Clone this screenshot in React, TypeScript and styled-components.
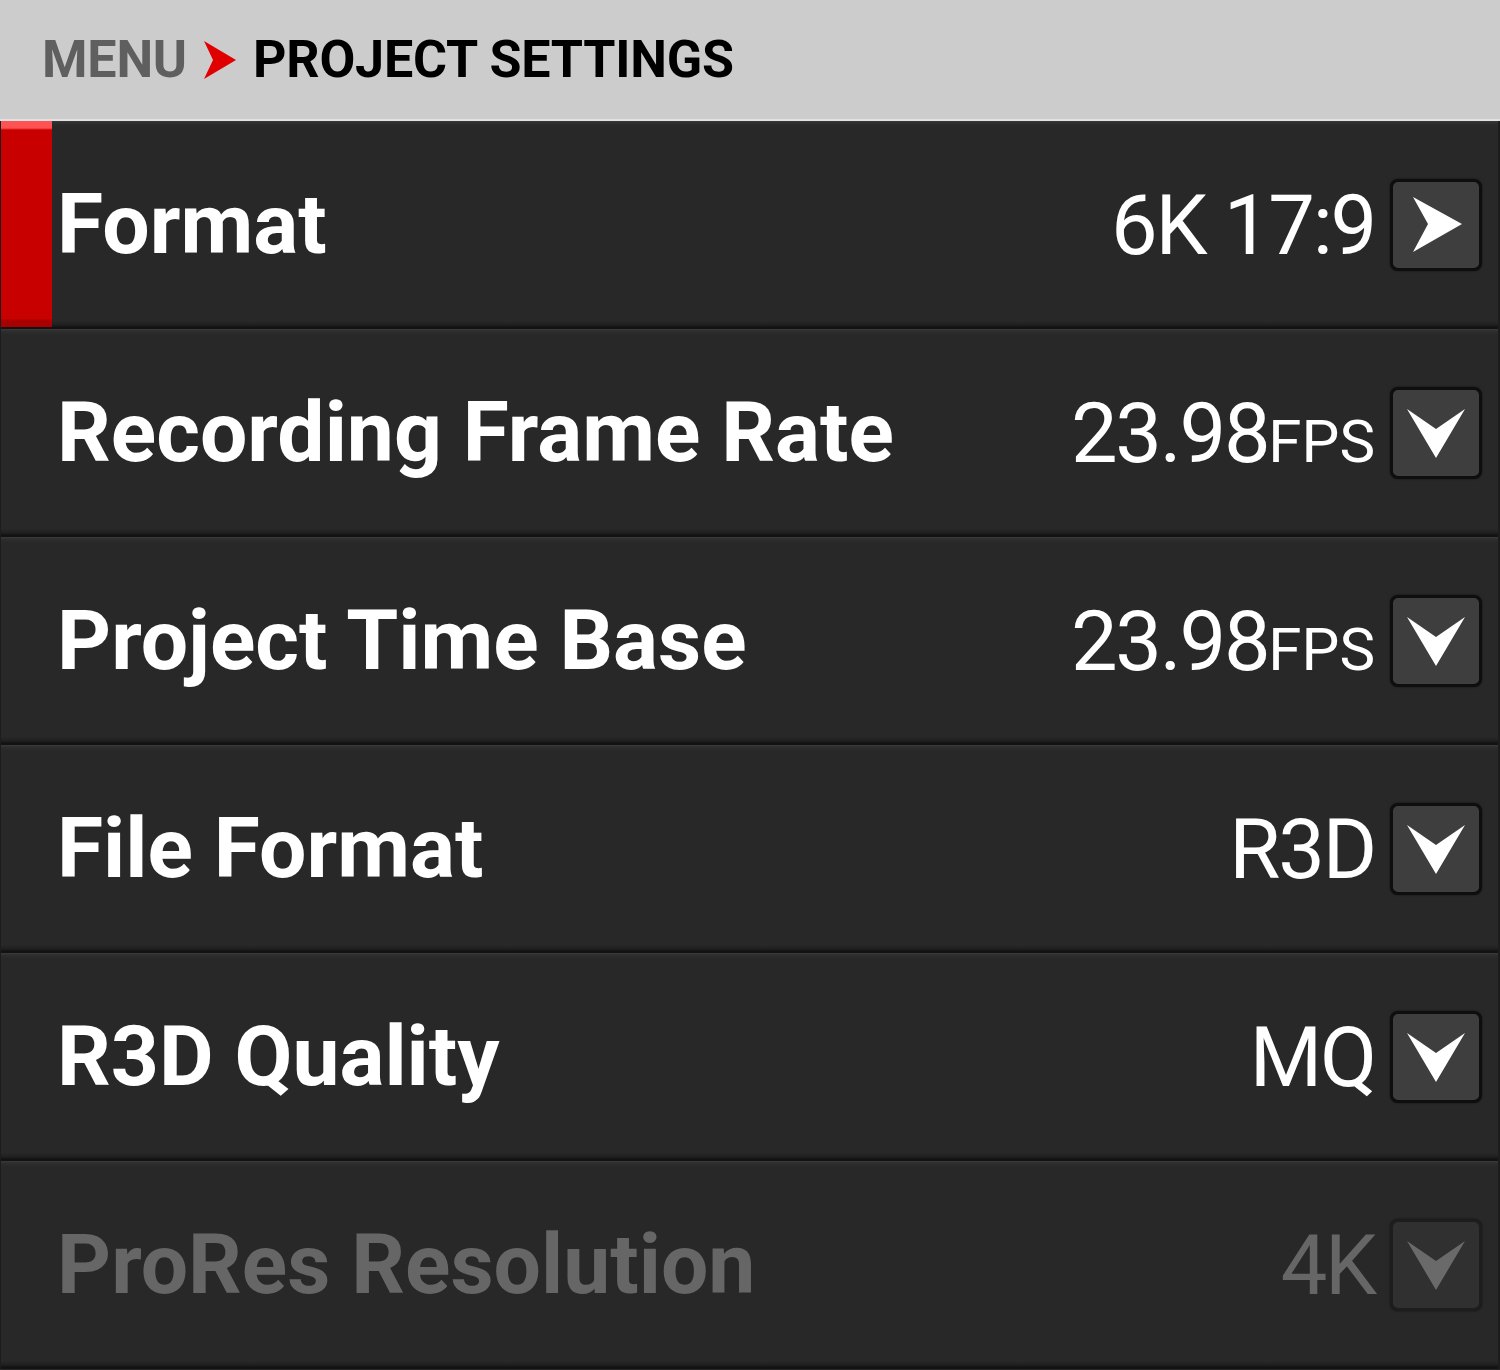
import React from "react";
import styled, { createGlobalStyle } from "styled-components";

const Global = createGlobalStyle`
  html, body { margin: 0; padding: 0; background: #262626; }
  body { font-family: Roboto, "Noto Sans", sans-serif; }
`;

const Screen = styled.div`
  width: 1500px;
  height: 1370px;
  overflow: hidden;
  display: flex;
  flex-direction: column;
  background: #262626;
`;

const Header = styled.div`
  height: 119px;
  flex: 0 0 119px;
  background: #cccccc;
  border-bottom: 2px solid #e2e2e2;
  display: flex;
  align-items: center;
  gap: 16px;
  padding-left: 42px;
  box-sizing: content-box;
  font-family: Roboto, sans-serif;
  font-weight: 700;
  font-size: 52px;
  letter-spacing: -0.2px;
`;

const Crumb = styled.span<{ $active?: boolean }>`
  color: ${(p) => (p.$active ? "#000000" : "#5f5f5f")};
  line-height: 1;
`;

const Row = styled.div`
  position: relative;
  flex: 0 0 208px;
  height: 208px;
  box-sizing: border-box;
  display: flex;
  align-items: center;
  padding: 0 16px 0 56px;
  background: linear-gradient(
    to bottom,
    #3a3a3a 0px,
    #2e2e2e 2px,
    #282828 6px,
    #282828 calc(100% - 8px),
    #1f1f1f calc(100% - 4px),
    #121212 calc(100% - 2px),
    #141414 100%
  );
  border-left: 1px solid #1c1c1c;
  border-right: 2px solid #1c1c1c;
`;

const SelectMark = styled.div`
  position: absolute;
  left: 0;
  top: 0;
  width: 51px;
  bottom: 2px;
  background: linear-gradient(
    to bottom,
    #ff5252 0px,
    #ff5252 7px,
    #c80000 9px,
    #c80000 calc(100% - 8px),
    #a80000 calc(100% - 7px),
    #a80000 100%
  );
`;

const Label = styled.div<{ $disabled?: boolean }>`
  flex: 1;
  font-family: Roboto, sans-serif;
  font-weight: 700;
  font-size: 84px;
  color: ${(p) => (p.$disabled ? "#666666" : "#ffffff")};
  line-height: 1;
  white-space: nowrap;
`;

const Value = styled.div<{ $disabled?: boolean }>`
  font-family: Roboto, sans-serif;
  font-weight: 400;
  font-size: 83px;
  letter-spacing: -2.2px;
  color: ${(p) => (p.$disabled ? "#666666" : "#ffffff")};
  line-height: 1;
  white-space: nowrap;
  margin-right: 15px;
`;

const Unit = styled.span`
  font-size: 60px;
  letter-spacing: 0;
`;

const ArrowButton = styled.div<{ $disabled?: boolean }>`
  width: 92px;
  height: 92px;
  box-sizing: border-box;
  border: 3px solid ${(p) => (p.$disabled ? "#1d1d1d" : "#0e0e0e")};
  border-radius: 8px;
  background: ${(p) => (p.$disabled ? "#303030" : "#3e3e3e")};
  box-shadow: 0 0 2px rgba(0, 0, 0, 0.6);
  display: flex;
  align-items: center;
  justify-content: center;
`;

const RightArrow = ({ color }: { color: string }) => (
  <svg width="60" height="60" viewBox="0 0 60 60">
    <path d="M7 2 L56 29 L7 57 L22 29 Z" fill={color} />
  </svg>
);

const DownArrow = ({ color }: { color: string }) => (
  <svg width="64" height="60" viewBox="0 0 64 60">
    <path d="M3 6 L32 26 L61 6 L32 55 Z" fill={color} />
  </svg>
);

const HeaderArrow = () => (
  <svg width="34" height="38" viewBox="0 0 34 38">
    <path d="M1 0 L33 19 L1 38 L10 19 Z" fill="#e00000" />
  </svg>
);

type Item = {
  label: string;
  value: string;
  unit?: string;
  kind: "right" | "down";
  selected?: boolean;
  disabled?: boolean;
};

const items: Item[] = [
  { label: "Format", value: "6K 17:9", kind: "right", selected: true },
  { label: "Recording Frame Rate", value: "23.98", unit: "FPS", kind: "down" },
  { label: "Project Time Base", value: "23.98", unit: "FPS", kind: "down" },
  { label: "File Format", value: "R3D", kind: "down" },
  { label: "R3D Quality", value: "MQ", kind: "down" },
  { label: "ProRes Resolution", value: "4K", kind: "down", disabled: true },
];

export default function App() {
  return (
    <>
      <Global />
      <Screen>
        <Header>
          <Crumb>MENU</Crumb>
          <HeaderArrow />
          <Crumb $active>PROJECT SETTINGS</Crumb>
        </Header>
        {items.map((it) => {
          const c = it.disabled ? "#6a6a6a" : "#ffffff";
          return (
            <Row key={it.label}>
              {it.selected && <SelectMark />}
              <Label $disabled={it.disabled}>{it.label}</Label>
              <Value $disabled={it.disabled}>
                {it.value}
                {it.unit && <Unit>{it.unit}</Unit>}
              </Value>
              <ArrowButton $disabled={it.disabled}>
                {it.kind === "right" ? <RightArrow color={c} /> : <DownArrow color={c} />}
              </ArrowButton>
            </Row>
          );
        })}
      </Screen>
    </>
  );
}
